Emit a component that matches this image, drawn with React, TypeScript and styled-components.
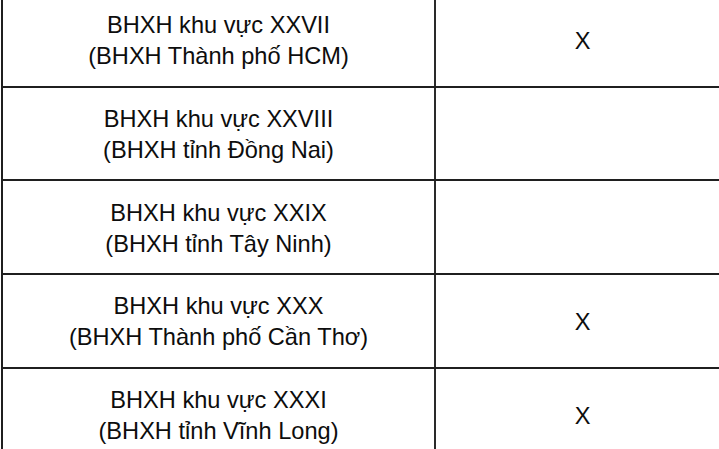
import styled, { createGlobalStyle } from "styled-components";

const GlobalStyle = createGlobalStyle`
  html, body {
    margin: 0;
    padding: 0;
    background: #ffffff;
    overflow: hidden;
  }
  body {
    font-family: "Liberation Sans", Arial, sans-serif;
    color: #0d0d0d;
  }
`;

const Table = styled.div`
  width: 726px;
  margin-top: -6px;
  margin-left: 1px;
  border-left: 2px solid #1f1f1f;
`;

const Row = styled.div`
  display: grid;
  grid-template-columns: 431px 1fr;
  height: 93.7px;
  box-sizing: border-box;
  border-bottom: 2.5px solid #1f1f1f;
`;

const Cell = styled.div<{ $divider?: boolean }>`
  display: flex;
  flex-direction: column;
  align-items: center;
  justify-content: center;
  padding-top: 3px;
  box-sizing: border-box;
  text-align: center;
  font-size: 23.6px;
  line-height: 31px;
  border-left: ${(p) => (p.$divider ? "2px solid #2a2a2a" : "none")};
`;

const Line = styled.span`
  display: block;
  white-space: nowrap;
`;

const rows = [
  { name: "BHXH khu vực XXVII", sub: "(BHXH Thành phố HCM)", mark: true },
  { name: "BHXH khu vực XXVIII", sub: "(BHXH tỉnh Đồng Nai)", mark: false },
  { name: "BHXH khu vực XXIX", sub: "(BHXH tỉnh Tây Ninh)", mark: false },
  { name: "BHXH khu vực XXX", sub: "(BHXH Thành phố Cần Thơ)", mark: true },
  { name: "BHXH khu vực XXXI", sub: "(BHXH tỉnh Vĩnh Long)", mark: true },
];

export default function App() {
  return (
    <>
      <GlobalStyle />
      <Table>
        {rows.map((r) => (
          <Row key={r.name}>
            <Cell>
              <Line>{r.name}</Line>
              <Line>{r.sub}</Line>
            </Cell>
            <Cell $divider>{r.mark ? <Line>X</Line> : null}</Cell>
          </Row>
        ))}
      </Table>
    </>
  );
}
